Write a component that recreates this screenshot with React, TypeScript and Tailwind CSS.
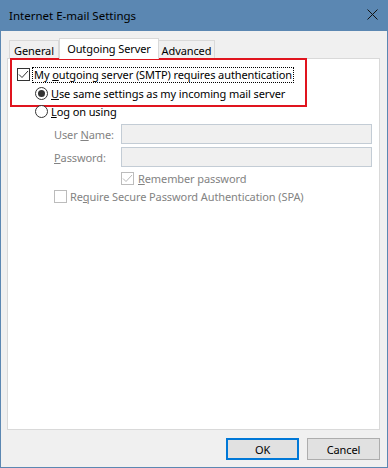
import React from "react";

const font = { fontFamily: '"Noto Sans", "Open Sans", sans-serif' };

function CheckBox({ checked, disabled }: { checked?: boolean; disabled?: boolean }) {
  return (
    <span
      className={`flex h-[13px] w-[13px] shrink-0 items-center justify-center border ${
        disabled ? "border-[#bcbcbc] bg-white" : "border-[#333333] bg-white"
      }`}
    >
      {checked && (
        <svg width="11" height="11" viewBox="0 0 11 11">
          <path d="M1 5.5 L4 8.5 L10 2" fill="none" stroke={disabled ? "#b8b8b8" : "#333333"} strokeWidth="1" />
        </svg>
      )}
    </span>
  );
}

function Radio({ checked }: { checked?: boolean }) {
  return (
    <span className="flex h-[13px] w-[13px] shrink-0 items-center justify-center rounded-full border border-[#333333] bg-white">
      {checked && <span className="h-[7px] w-[7px] rounded-full bg-[#333333]" />}
    </span>
  );
}

export default function App() {
  return (
    <div
      className="flex h-[468px] w-[388px] flex-col whitespace-nowrap text-[11px] leading-none tracking-[-0.1px] text-black"
      style={font}
    >
      {/* title bar */}
      <div className="flex h-[31px] shrink-0 items-center justify-between bg-[#5b87b2] pl-[9px] pr-[10px]">
        <span className="text-[11.5px] tracking-normal text-black">Internet E-mail Settings</span>
        <svg width="11" height="11" viewBox="0 0 11 11" className="-mt-[2px]">
          <path d="M0.5 0.5 L10.5 10.5 M10.5 0.5 L0.5 10.5" stroke="#111" strokeWidth="1" />
        </svg>
      </div>

      {/* body */}
      <div className="flex flex-1 flex-col border-x border-b border-[#5b87b2] bg-[#f0f0f0] pl-[6px] pr-[7px]">
        {/* tabs */}
        <div className="mt-[7px] flex h-[20px] items-end pl-[2px]">
          <div className="flex h-[18px] w-[50px] items-center justify-center border border-b-0 border-[#d9d9d9] bg-[#f0f0f0] pt-[2px]">
            General
          </div>
          <div className="relative z-10 -mb-px flex h-[21px] w-[100px] items-center justify-center border border-b-0 border-[#d9d9d9] bg-white pb-[2px]">
            Outgoing Server
          </div>
          <div className="flex h-[18px] w-[56px] items-center justify-center border border-b-0 border-l-0 border-[#d9d9d9] bg-[#f0f0f0] pt-[2px]">
            Advanced
          </div>
        </div>

        {/* panel */}
        <div className="flex h-[372px] flex-col border border-[#d9d9d9] bg-white pl-[2px]">
          <div className="-mt-px h-[49px] w-[297px] border-2 border-[#e0141e] pt-[8px]">
            <div className="flex h-[13px] items-center pl-[5px]">
              <CheckBox checked />
              <span className="ml-[2px] flex h-[16px] items-center border border-dotted border-black px-px">
                My&nbsp;<span className="underline">o</span>utgoing server (SMTP) requires authentication
              </span>
            </div>
            <div className="mt-[6px] flex h-[13px] items-center pl-[23px]">
              <Radio checked />
              <span className="ml-[3px]">
                <span className="underline">U</span>se same settings as my incoming mail server
              </span>
            </div>
          </div>

          <div className="-mt-[2px] flex h-[13px] items-center pl-[25px]">
            <Radio />
            <span className="ml-[3px]">
              <span className="underline">L</span>og on using
            </span>
          </div>

          <div className="mt-[6px] flex h-[20px] items-center pl-[44px] pr-[7px] text-[#838383]">
            <span className="w-[67px]">
              User <span className="underline">N</span>ame:
            </span>
            <div className="h-[20px] flex-1 border border-[#c3ccd5] bg-[#f0f0f0]" />
          </div>
          <div className="mt-[3px] flex h-[20px] items-center pl-[44px] pr-[7px] text-[#838383]">
            <span className="w-[67px]">
              <span className="underline">P</span>assword:
            </span>
            <div className="h-[20px] flex-1 border border-[#c3ccd5] bg-[#f0f0f0]" />
          </div>

          <div className="mt-[5px] flex h-[13px] items-center pl-[111px] text-[#838383]">
            <CheckBox checked disabled />
            <span className="ml-[4px]">
              <span className="underline">R</span>emember password
            </span>
          </div>

          <div className="mt-[5px] flex h-[13px] items-center pl-[44px] text-[#838383]">
            <CheckBox disabled />
            <span className="ml-[3px]">
              Re<span className="underline">q</span>uire Secure Password Authentication (SPA)
            </span>
          </div>
        </div>

        {/* buttons */}
        <div className="mt-[8px] flex justify-end gap-[8px]">
          <button className="flex h-[22px] w-[73px] items-center justify-center border-2 border-[#0078d7] bg-[#e1e1e1]">
            OK
          </button>
          <button className="flex h-[22px] w-[73px] items-center justify-center border border-[#adadad] bg-[#e1e1e1]">
            Cancel
          </button>
        </div>
      </div>
    </div>
  );
}
